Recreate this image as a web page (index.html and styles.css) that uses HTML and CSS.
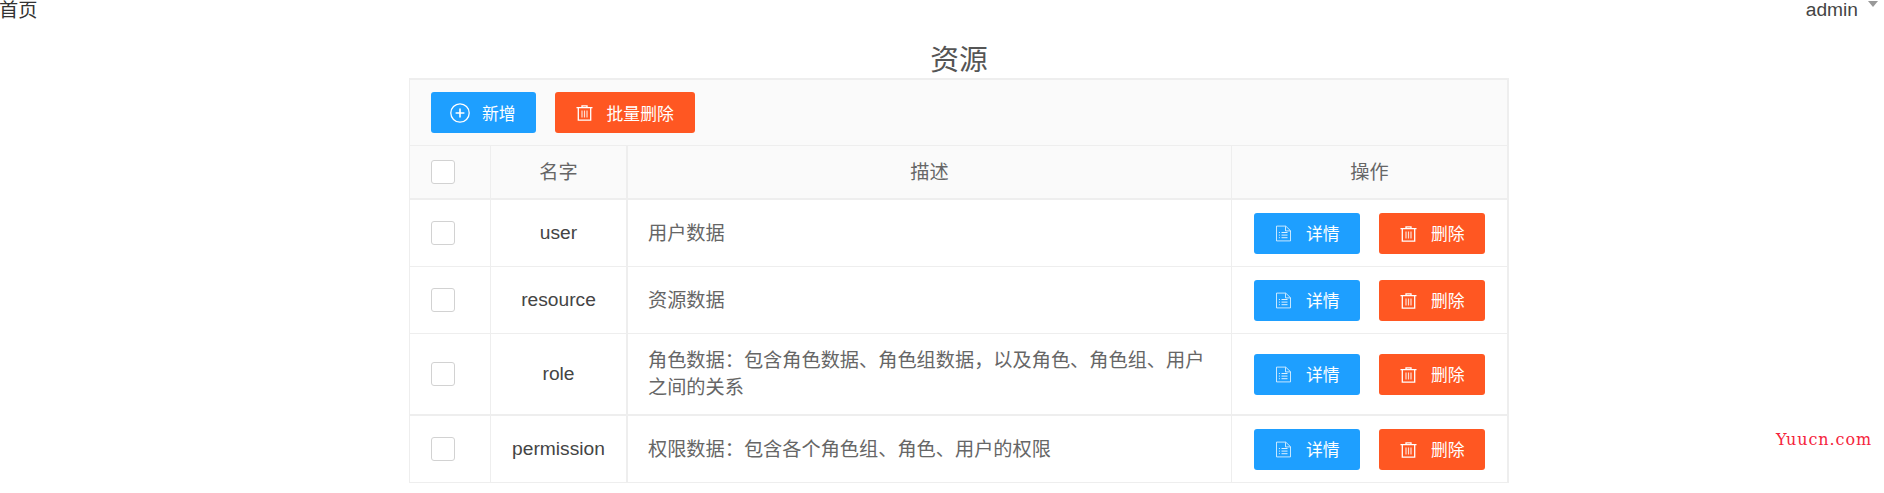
FILE: index.html
```html
<!DOCTYPE html>
<html lang="zh-CN">

<head>
    <meta charset="UTF-8">
    <title>资源</title>
    <link rel="stylesheet" href="styles.css">
</head>

<body>
    <header class="topbar">
        <a href="#" class="home-link">首页</a>
        <div class="user-menu">
            <span>admin</span>
            <span class="caret"></span>
        </div>
    </header>

    <svg class="icon-defs" width="0" height="0">
        <symbol id="icon-add" viewBox="0 0 20 20">
            <circle cx="10" cy="10" r="9.2" fill="none" stroke="currentColor" stroke-width="1.3"/>
            <path d="M10 5.6v8.8M5.6 10h8.8" fill="none" stroke="currentColor" stroke-width="1.6"/>
        </symbol>
        <symbol id="icon-trash" viewBox="0 -1 16 17">
            <path d="M5.5 2.2V.8h5v1.4M0 2.6h16" fill="none" stroke="currentColor" stroke-width="1.3"/>
            <path d="M1.8 2.8v12.4h12.4V2.8" fill="none" stroke="currentColor" stroke-width="1.3"/>
            <path d="M5.5 5.5v7M8 5.5v7M10.5 5.5v7" fill="none" stroke="currentColor" stroke-width="1.2" opacity=".8"/>
        </symbol>
        <symbol id="icon-doc" viewBox="-.5 -.5 17 17">
            <path d="M1 .6h9.2L15 5.2v10.2H1zM10 .8v4.6h5" fill="none" stroke="currentColor" stroke-width="1" opacity=".75"/>
            <path d="M6 7h6M6 9.6h6M6 12.2h6M3.4 7h1M3.4 9.6h1M3.4 12.2h1" fill="none" stroke="currentColor" stroke-width="1" opacity=".85"/>
        </symbol>
    </svg>

    <main class="content">
        <h1 class="page-title">资源</h1>

        <div class="panel">
            <div class="toolbar">
                <button class="btn btn-blue"><svg class="icon icon-big"><use href="#icon-add"/></svg>新增</button>
                <button class="btn btn-orange"><svg class="icon"><use href="#icon-trash"/></svg>批量删除</button>
            </div>

            <table class="res-table">
                <colgroup>
                    <col class="col-check">
                    <col class="col-name">
                    <col class="col-desc">
                    <col class="col-ops">
                </colgroup>
                <thead>
                    <tr>
                        <th><span class="checkbox"></span></th>
                        <th class="name-cell">名字</th>
                        <th>描述</th>
                        <th>操作</th>
                    </tr>
                </thead>
                <tbody>
                    <tr class="row">
                        <td><span class="checkbox"></span></td>
                        <td class="name-cell">user</td>
                        <td class="desc">用户数据</td>
                        <td>
                            <div class="ops">
                                <button class="btn btn-blue"><svg class="icon"><use href="#icon-doc"/></svg>详情</button>
                                <button class="btn btn-orange"><svg class="icon"><use href="#icon-trash"/></svg>删除</button>
                            </div>
                        </td>
                    </tr>
                    <tr class="row">
                        <td><span class="checkbox"></span></td>
                        <td class="name-cell">resource</td>
                        <td class="desc">资源数据</td>
                        <td>
                            <div class="ops">
                                <button class="btn btn-blue"><svg class="icon"><use href="#icon-doc"/></svg>详情</button>
                                <button class="btn btn-orange"><svg class="icon"><use href="#icon-trash"/></svg>删除</button>
                            </div>
                        </td>
                    </tr>
                    <tr class="row row-tall">
                        <td><span class="checkbox"></span></td>
                        <td class="name-cell">role</td>
                        <td class="desc">角色数据&#xFF1A;包含角色数据、角色组数据&#xFF0C;以及角色、角色组、用户之间的关系</td>
                        <td>
                            <div class="ops">
                                <button class="btn btn-blue"><svg class="icon"><use href="#icon-doc"/></svg>详情</button>
                                <button class="btn btn-orange"><svg class="icon"><use href="#icon-trash"/></svg>删除</button>
                            </div>
                        </td>
                    </tr>
                    <tr class="row row-last">
                        <td><span class="checkbox"></span></td>
                        <td class="name-cell">permission</td>
                        <td class="desc">权限数据&#xFF1A;包含各个角色组、角色、用户的权限</td>
                        <td>
                            <div class="ops">
                                <button class="btn btn-blue"><svg class="icon"><use href="#icon-doc"/></svg>详情</button>
                                <button class="btn btn-orange"><svg class="icon"><use href="#icon-trash"/></svg>删除</button>
                            </div>
                        </td>
                    </tr>
                </tbody>
            </table>
        </div>
    </main>

    <div class="watermark">Yuucn.com</div>
</body>

</html>
```

FILE: styles.css
```css
body {
    margin: 0;
    background: #fff;
    color: #444;
    font-family: "Liberation Sans", "Noto Sans CJK SC", sans-serif;
    font-size: 19.2px;
    overflow: hidden;
}

.topbar {
    display: flex;
    justify-content: space-between;
    height: 26px;
    line-height: 20px;
}

.home-link {
    margin-left: -1px;
    padding-top: 1px;
    color: #333;
    text-decoration: none;
}

.user-menu {
    display: flex;
    align-items: flex-start;
    gap: 10px;
    margin-right: 6px;
}

.caret {
    width: 0;
    height: 0;
    margin-top: 1px;
    border: 5px solid transparent;
    border-top: 6px solid #999;
    border-bottom: 0;
}

.icon-defs {
    display: none;
}

.content {
    width: 1100px;
    margin-left: 408px;
    padding-left: 1px;
}

.page-title {
    margin: 17px 0 0;
    height: 35px;
    font-size: 28.8px;
    font-weight: 400;
    line-height: 34px;
    text-align: center;
    color: #555;
}

.panel {
    box-sizing: border-box;
    border: solid #eee;
    border-width: 2px 2px 1px 1px;
}

.toolbar {
    display: flex;
    gap: 19px;
    padding: 12px 21px;
    background: #fafafa;
    border-bottom: 1px solid #eee;
}

.toolbar .btn-orange {
    padding-right: 21px;
}

.btn {
    display: inline-flex;
    align-items: center;
    height: 41px;
    padding: 0 20px 0 19px;
    border: 0;
    border-radius: 3px;
    color: #fff;
    font-family: inherit;
    font-size: 16.8px;
    white-space: nowrap;
}

.btn-blue {
    background: #1e9fff;
}

.btn-orange {
    background: #ff5722;
}

.icon {
    width: 17px;
    height: 17px;
    margin: 0 14px 0 2px;
}

.icon-big {
    width: 20px;
    height: 20px;
    margin: 0 12px 0 0;
}

.res-table {
    width: 100%;
    table-layout: fixed;
    border-collapse: separate;
    border-spacing: 0;
}

.col-check {
    width: 81px;
}

.col-name {
    width: 137px;
}

.col-ops {
    width: 275px;
}

.res-table th,
.res-table td {
    padding: 0;
    border-right: 1px solid #eee;
    border-bottom: 1px solid #eee;
    text-align: center;
    vertical-align: middle;
}

.res-table th:last-child,
.res-table td:last-child {
    border-right: 0;
}

.res-table th {
    height: 54px;
    padding-bottom: 2px;
    box-sizing: border-box;
    background: #fafafa;
    border-bottom-width: 2px;
    color: #666;
    font-weight: 400;
}

.res-table .name-cell {
    border-right-width: 2px;
}

.row td {
    height: 66px;
}

.row-tall td {
    height: 80px;
    border-bottom-width: 2px;
}

.row-last td {
    height: 66px;
    border-bottom: 0;
}

.res-table .desc {
    padding: 0 20px;
    line-height: 27px;
    text-align: left;
    color: #666;
}

.ops {
    display: flex;
    gap: 19px;
    padding-left: 22px;
}

.ops .btn {
    box-sizing: border-box;
    width: 106px;
}

.checkbox {
    display: block;
    box-sizing: border-box;
    width: 24px;
    height: 24px;
    margin-left: 21px;
    background: #fff;
    border: 1px solid #d2d2d2;
    border-radius: 3px;
}

.res-table th .checkbox {
    margin-top: 2px;
}

.watermark {
    position: absolute;
    top: 430px;
    right: 12px;
    color: #f5243c;
    font-family: "DejaVu Serif", serif;
    font-size: 16px;
    letter-spacing: 0.9px;
}
```
